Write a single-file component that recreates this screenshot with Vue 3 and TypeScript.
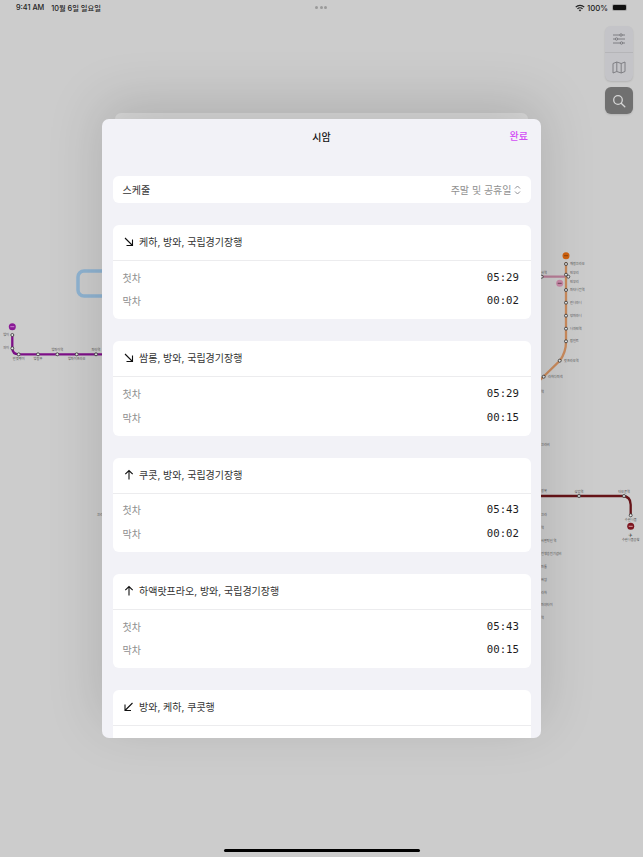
<template>
  <div class="screen">
    <svg class="map" viewBox="0 0 643 857" width="643" height="857">
      <rect x="78" y="271" width="40" height="25" rx="6" fill="none" stroke="#8fb3d1" stroke-width="3.5" />
      <path d="M12.3 335V348q0 6.3 6.3 6.3H110" fill="none" stroke="#7d0f87" stroke-width="2.3" />
      <path d="M530 276.7H568" fill="none" stroke="#b77c96" stroke-width="2.3" />
      <path d="M566 262V342q0 10-6 18.500L538 382" fill="none" stroke="#c98a5c" stroke-width="2.3" />
      <path d="M530 496H622q8.700 0 8.700 8.700V515" fill="none" stroke="#661418" stroke-width="2.3" />
      <g v-for="b in badges" :key="b.x">
        <circle :cx="b.x" :cy="b.y" r="3.500" :fill="b.color" />
        <rect :x="b.x - 2" :y="b.y - 0.500" width="4" height="1" :fill="b.mark" />
      </g>
      <circle
        v-for="s in stations"
        :key="`${s.x}-${s.y}`"
        :cx="s.x"
        :cy="s.y"
        r="1.500"
        fill="#e8e8e8"
        stroke="#333"
        stroke-width="0.800"
      />
      <text
        v-for="l in labels"
        :key="`${l.x}-${l.y}`"
        :x="l.x"
        :y="l.y"
        :text-anchor="l.anchor ?? 'start'"
        class="map-label"
      >{{ l.text }}</text>
      <text x="630.700" y="536.500" text-anchor="middle" class="map-plane">✈</text>
    </svg>

    <div class="status-bar">
      <div class="status-left">
        <span>9:41 AM</span>
        <span>10월 6일 일요일</span>
      </div>
      <div class="status-dots"><i></i><i></i><i></i></div>
      <div class="status-right">
        <svg width="10" height="8" viewBox="0 0 10 8">
          <path d="M0.300 2.700a6.600 6.600 0 0 1 9.400 0l-.9.900a5.300 5.300 0 0 0-7.600 0z" fill="#222" />
          <path d="M2 4.400a4.200 4.200 0 0 1 6 0l-.9.900a2.900 2.900 0 0 0-4.200 0z" fill="#222" />
          <path d="M3.700 6.100a1.800 1.800 0 0 1 2.600 0L5 7.500z" fill="#222" />
        </svg>
        <span>100%</span>
        <div class="battery"><div class="battery-fill"></div></div>
      </div>
    </div>

    <div class="tools">
      <div class="tool-group">
        <button class="tool" type="button">
          <svg width="14" height="12" viewBox="0 0 14 12" fill="none" stroke="#77777c" stroke-width="0.900">
            <path d="M1 2H13M1 6H13M1 10H13" />
            <circle cx="9" cy="2" r="1.200" fill="#c4c4c8" />
            <circle cx="4.500" cy="6" r="1.200" fill="#c4c4c8" />
            <circle cx="9.500" cy="10" r="1.200" fill="#c4c4c8" />
          </svg>
        </button>
        <button class="tool tool-map" type="button">
          <svg width="14" height="13" viewBox="0 0 14 13" fill="none" stroke="#77777c" stroke-width="0.900" stroke-linejoin="round">
            <path d="M1 2.500 4.800 1 9.200 2.500 13 1V10.500L9.200 12 4.800 10.500 1 12Z" />
            <path d="M4.800 1V10.500M9.200 2.500V12" />
          </svg>
        </button>
      </div>
      <button class="tool tool-search" type="button">
        <svg width="14" height="14" viewBox="0 0 14 14" fill="none" stroke="#d6d6d6" stroke-width="1.300" stroke-linecap="round">
          <circle cx="6" cy="6" r="4.300" />
          <path d="M9.200 9.200 12.800 12.800" />
        </svg>
      </button>
    </div>

    <div class="sheet-back"></div>

    <section class="sheet">
      <header class="sheet-head">
        <h1>시암</h1>
        <button class="done" type="button">완료</button>
      </header>

      <div class="sheet-body">
        <div class="card schedule">
          <span>스케줄</span>
          <span class="schedule-value">
            주말 및 공휴일
            <svg width="7" height="10" viewBox="0 0 7 10" fill="none" stroke="#8e8e93" stroke-width="1">
              <path d="M1 3.500 3.500 1 6 3.500M1 6.500 3.500 9 6 6.500" />
            </svg>
          </span>
        </div>

        <div v-for="d in directions" :key="d.name" class="card direction">
          <div class="direction-head">
            <svg width="10" height="11" viewBox="0 0 10 11" fill="none" stroke="#111" stroke-width="1.100">
              <path :d="arrows[d.arrow]" />
            </svg>
            <span>{{ d.name }}</span>
          </div>
          <div class="times">
            <template v-if="d.first">
              <div class="time-row">
                <span>첫차</span>
                <span class="time">{{ d.first }}</span>
              </div>
              <div class="time-row">
                <span>막차</span>
                <span class="time">{{ d.last }}</span>
              </div>
            </template>
          </div>
        </div>
      </div>
    </section>

    <div class="home-bar"></div>
  </div>
</template>

<script setup lang="ts">
type Arrow = 'downRight' | 'up' | 'downLeft'

const arrows: Record<Arrow, string> = {
  downRight: 'M1 2 8.500 9.500M8.500 3.500V9.500H2.500',
  up: 'M5 10.500V1.500M1.300 5.200 5 1.500 8.700 5.200',
  downLeft: 'M8.500 2 1 9.500M1 3.500V9.500H7',
}

// the last card is cut off by the sheet, its rows are never visible
const directions: { name: string; arrow: Arrow; first?: string; last?: string }[] = [
  { name: '케하, 방와, 국립경기장행', arrow: 'downRight', first: '05:29', last: '00:02' },
  { name: '쌈롱, 방와, 국립경기장행', arrow: 'downRight', first: '05:29', last: '00:15' },
  { name: '쿠콧, 방와, 국립경기장행', arrow: 'up', first: '05:43', last: '00:02' },
  { name: '하액랏프라오, 방와, 국립경기장행', arrow: 'up', first: '05:43', last: '00:15' },
  { name: '방와, 케하, 쿠콧행', arrow: 'downLeft' },
]

const stations = [
  { x: 12.3, y: 335 }, { x: 12.3, y: 348.3 }, { x: 18.7, y: 354.3 }, { x: 38, y: 354.3 },
  { x: 57.3, y: 354.3 }, { x: 76.7, y: 354.3 }, { x: 96, y: 354.3 },
  { x: 566, y: 264 }, { x: 566, y: 274.7 }, { x: 568.3, y: 276.7 }, { x: 566, y: 290 },
  { x: 566, y: 302.7 }, { x: 566, y: 315.7 }, { x: 566, y: 328.7 }, { x: 566, y: 341.3 },
  { x: 559.7, y: 360.7 }, { x: 543.7, y: 376.7 }, { x: 541.7, y: 276.7 },
  { x: 579, y: 496 }, { x: 624, y: 496 }, { x: 630.7, y: 515.3 },
]

const badges = [
  { x: 12.3, y: 326.7, color: '#8a1a96', mark: '#c987d0' },
  { x: 566, y: 255.7, color: '#d0620f', mark: '#8f4510' },
  { x: 559.7, y: 283.3, color: '#c98aa8', mark: '#6b4155' },
  { x: 630.7, y: 526.3, color: '#7d1620', mark: '#d9a0a4' },
]

const labels: { x: number; y: number; text: string; anchor?: string }[] = [
  { x: 9, y: 336, text: '방이', anchor: 'end' },
  { x: 9, y: 349, text: '와이', anchor: 'end' },
  { x: 18.7, y: 360, text: '반껫펫이', anchor: 'middle' },
  { x: 38, y: 360, text: '방람푸', anchor: 'middle' },
  { x: 57.3, y: 351, text: '방파이역', anchor: 'middle' },
  { x: 76.700, y: 360, text: '방파이프라오', anchor: 'middle' },
  { x: 96, y: 351, text: '파타역', anchor: 'middle' },
  { x: 570, y: 265, text: '깨랑끄라오' },
  { x: 570, y: 274, text: '민부리' },
  { x: 570, y: 283, text: '민부리' },
  { x: 570, y: 291, text: '파타나칸역' },
  { x: 570, y: 304, text: '친나와니' },
  { x: 570, y: 317, text: '덩마와니' },
  { x: 570, y: 330, text: '나와민역' },
  { x: 570, y: 342, text: '람인트' },
  { x: 564, y: 362, text: '랏프라오역' },
  { x: 548, y: 378, text: '라차다피섹' },
  { x: 541, y: 274, text: '사역' },
  { x: 541, y: 393, text: '역' },
  { x: 541, y: 446, text: '끄라비' },
  { x: 541, y: 492, text: '왕복' },
  { x: 579, y: 493, text: '상업역', anchor: 'middle' },
  { x: 624, y: 493, text: '타오윤역', anchor: 'middle' },
  { x: 630.700, y: 521, text: '수완나품', anchor: 'middle' },
  { x: 630.700, y: 541, text: '수완나품공항', anchor: 'middle' },
  { x: 541, y: 516, text: '끄라' },
  { x: 541, y: 529, text: '역' },
  { x: 541, y: 542, text: '사판탁신 역' },
  { x: 541, y: 555, text: '전쟁승전기념비' },
  { x: 541, y: 568, text: '파툼' },
  { x: 541, y: 581, text: '싸얌' },
  { x: 541, y: 594, text: '라차' },
  { x: 541, y: 606, text: '파야타이' },
  { x: 541, y: 619, text: '역' },
  { x: 97, y: 516, text: '끄라' },
]
</script>

<style>
html,
body {
  margin: 0;
  background: #cccccc;
}
</style>

<style scoped>
.screen {
  position: relative;
  width: 643px;
  height: 857px;
  overflow: hidden;
  background: #cccccc;
  font-family: "Inter", "Noto Sans CJK KR", sans-serif;
  color: #111;
}

.map {
  position: absolute;
  inset: 0;
}

.map-label {
  font-family: "Noto Sans CJK KR", sans-serif;
  font-size: 3.2px;
  fill: #555;
}

.map-plane {
  font-family: "DejaVu Sans", sans-serif;
  font-size: 5px;
  fill: #444;
}

.status-bar {
  position: relative;
  display: flex;
  align-items: center;
  justify-content: space-between;
  height: 15px;
  padding: 0 16px;
  font-size: 7.300px;
  font-weight: 500;
  color: #222;
}

.status-left {
  display: flex;
  gap: 7px;
}

.status-dots {
  position: absolute;
  left: 315px;
  top: 6px;
  display: flex;
  gap: 1.500px;
}

.status-dots i {
  width: 3px;
  height: 3px;
  border-radius: 50%;
  background: #9a9a9a;
}

.status-right {
  display: flex;
  align-items: center;
  gap: 2px;
  font-size: 7.800px;
}

.battery {
  width: 15px;
  height: 7px;
  margin-left: 2px;
  padding: 1px;
  box-sizing: border-box;
  border-radius: 2px;
  background: #a5a5a5;
}

.battery-fill {
  height: 100%;
  border-radius: 1px;
  background: #111;
}

.tools {
  position: absolute;
  top: 26px;
  left: 605px;
  display: flex;
  flex-direction: column;
  gap: 6px;
  width: 28px;
}

.tool-group {
  border-radius: 6px;
  overflow: hidden;
  background: #c4c4c8;
  box-shadow: 0 1px 2px rgba(0, 0, 0, 0.12);
}

.tool {
  display: flex;
  align-items: center;
  justify-content: center;
  width: 28px;
  height: 26px;
  padding: 0;
  border: 0;
  background: transparent;
}

.tool-map {
  height: 29px;
  border-top: 1px solid #b5b5b8;
}

.tool-search {
  height: 27px;
  border-radius: 6px;
  background: #707070;
  box-shadow: 0 1px 2px rgba(0, 0, 0, 0.12);
}

.sheet-back {
  position: absolute;
  top: 113px;
  left: 115px;
  width: 413px;
  height: 30px;
  border-radius: 6px 6px 0 0;
  background: #dcdcdc;
}

.sheet {
  position: absolute;
  top: 119px;
  left: 102px;
  display: flex;
  flex-direction: column;
  width: 439px;
  height: 619px;
  overflow: hidden;
  border-radius: 7px;
  background: #f2f2f7;
  box-shadow: 0 -15px 55px rgba(0, 0, 0, 0.15);
}

.sheet-head {
  position: relative;
  flex: none;
  display: flex;
  align-items: center;
  justify-content: center;
  height: 34px;
}

.sheet-head h1 {
  margin: 0;
  font-size: 10px;
  font-weight: 500;
  color: #111;
}

.done {
  position: absolute;
  right: 13px;
  top: 9px;
  padding: 0;
  border: 0;
  background: none;
  font: inherit;
  font-size: 10px;
  font-weight: 500;
  color: #d24cf5;
}

.sheet-body {
  display: flex;
  flex-direction: column;
  gap: 22px;
  padding: 23px 10px 0 11px;
}

.card {
  flex: none;
  border-radius: 6px;
  background: #fff;
}

.schedule {
  display: flex;
  align-items: center;
  justify-content: space-between;
  height: 27px;
  padding: 0 10px 0 9.500px;
  font-size: 10px;
  color: #333;
}

.schedule-value {
  display: flex;
  align-items: center;
  gap: 2.500px;
  color: #909090;
}

.direction-head {
  display: flex;
  align-items: center;
  gap: 5px;
  height: 36px;
  padding: 0 10px 2px 11px;
  border-bottom: 1px solid #ececee;
  box-sizing: border-box;
  font-size: 10px;
  color: #333;
}

.times {
  display: flex;
  flex-direction: column;
  min-height: 47px;
  padding: 4.500px 12px 6.750px 9.500px;
}

.time-row {
  display: flex;
  align-items: center;
  justify-content: space-between;
  height: 23.500px;
  font-size: 10px;
  color: #909090;
}

.time {
  font-family: "DejaVu Sans Mono", monospace;
  font-size: 10.700px;
  color: #1c1c1e;
}

.home-bar {
  position: absolute;
  left: 224px;
  top: 849px;
  width: 196px;
  height: 3px;
  border-radius: 2px;
  background: #000;
}
</style>
